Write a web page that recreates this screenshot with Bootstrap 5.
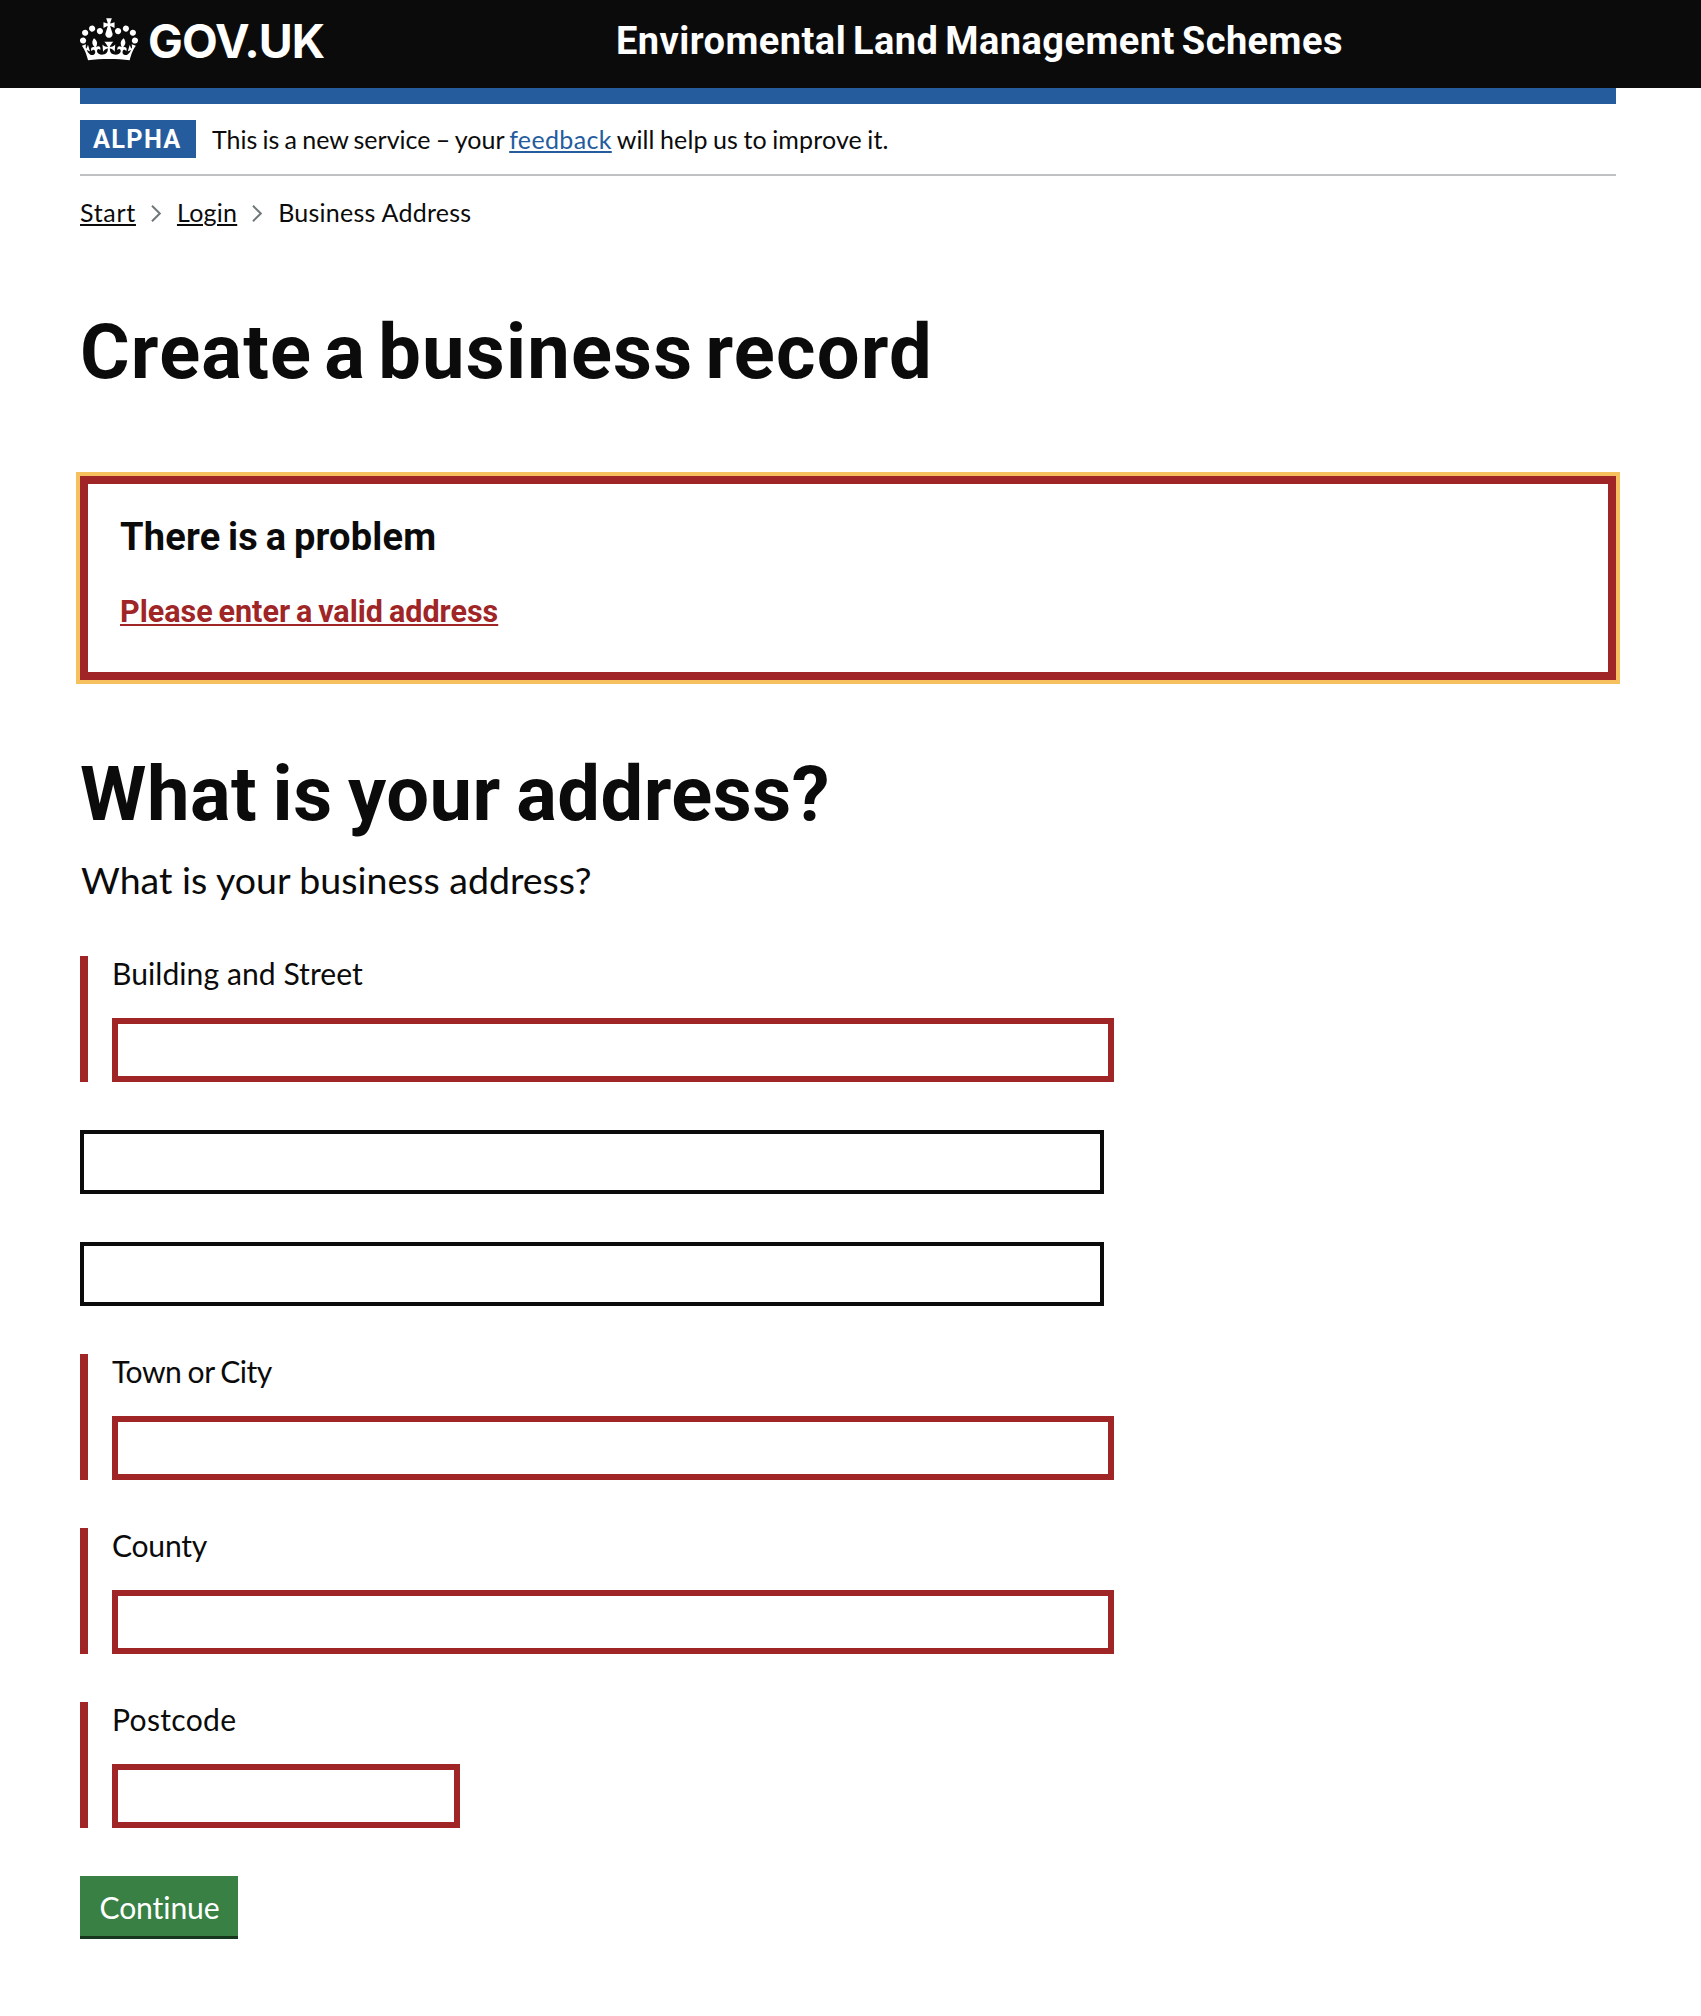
<!DOCTYPE html>
<html lang="en">
<head>
<meta charset="utf-8">
<meta name="viewport" content="width=device-width, initial-scale=1">
<title>Create a business record</title>
<link href="https://cdn.jsdelivr.net/npm/bootstrap@5.3.0/dist/css/bootstrap.min.css" rel="stylesheet">
<style>
  body { font-family: Lato, "Noto Sans", sans-serif; color: #0b0b0b; background: #fff; font-size: 30.1px; font-variant-ligatures: none; }
  .page-width { width: 1536px; margin-left: 80px; }
  .site-header { background: #0b0b0b; height: 88px; padding-bottom: 6px; }
  .logo-col { width: 536px; }
  .logo-col svg { margin-bottom: 3px; }
  .logo-word { font: 700 46.4px/1 Inter, sans-serif; letter-spacing: -.9px; margin-left: 10px; }
  .service-name { font: 700 38px/1 Roboto, sans-serif; letter-spacing: .45px; word-spacing: -3px; }
  .blue-bar { height: 16px; background: #255c9e; }
  .phase { padding: 16px 0; border-bottom: 2px solid #bfc1c3; }
  .phase-tag { width: 116px; height: 38px; background: #255c9e; color: #fff; padding-left: 13px; font: 700 25.3px/40px Roboto, sans-serif; letter-spacing: 1.3px; }
  .phase-text { margin-left: 16px; font-size: 25px; line-height: 38px; word-spacing: -1.2px; }
  a { color: inherit; text-decoration: underline 2px; text-underline-offset: 2px; }
  .phase-text a { color: #255c9e; letter-spacing: .35px; }
  .phase-tail { letter-spacing: .15px; }
  .trail { font-size: 25px; line-height: 40px; margin-top: 16px; letter-spacing: .25px; }
  .trail svg { margin: 0 16px 5px 15px; }
  .trail li:first-child a { letter-spacing: .7px; }
  .heading-xl { font: 700 75.9px/80px Roboto, sans-serif; margin: 81px 0 0; letter-spacing: 1.2px; word-spacing: -8px; }
  .heading-question { margin-top: 75px; letter-spacing: .5px; word-spacing: -4px; }
  .error-box { margin-top: 83px; height: 204px; border: 8px solid #a02526; outline: 4px solid #f6c05f; padding: 33px 32px 0; font-family: Roboto, sans-serif; }
  .error-box h2 { font-size: 38px; line-height: 40px; font-weight: 700; letter-spacing: .2px; word-spacing: -2px; margin: 0 0 32px; }
  .error-box a { display: inline-block; font-size: 30.5px; line-height: 40px; font-weight: 700; letter-spacing: 0; word-spacing: -1.7px; color: #a02526; }
  .intro { font-size: 37.5px; line-height: 40px; margin: 25px 0 56px 1px; }
  .form-stack { gap: 48px; }
  .field-error { border-left: 8px solid #a02526; padding-left: 24px; }
  .field-error label { display: block; line-height: 32px; padding-top: 1px; margin-bottom: 29px; letter-spacing: .05px; }
  .field-error label[for=town] { letter-spacing: -.5px; word-spacing: -1px; }
  .field-error label[for=county] { letter-spacing: -.25px; }
  .field-error label[for=postcode] { letter-spacing: .3px; }
  .field { width: 1024px; height: 64px; border: 4px solid #0b0b0b; border-radius: 0; }
  .field-error .field { width: 1002px; border: 6px solid #a02526; }
  .field-error .field-short { width: 348px; }
  .go { width: 158px; height: 63px; border: 0; border-bottom: 3px solid #17351d; border-radius: 0; background: #388044; color: #fff; font-size: 30.1px; line-height: 60px; letter-spacing: -.1px; font-variant-ligatures: none; padding: 1px 0 0 1px; }
</style>
</head>
<body>
<header class="site-header d-flex">
  <div class="page-width d-flex align-items-center text-white">
    <div class="logo-col d-flex align-items-center">
      <svg width="58" height="43" viewBox="0 0 132 97" fill="#fff" aria-hidden="true"><path fill-rule="evenodd" d="M25 30.2c3.5 1.5 7.7-.2 9.1-3.7 1.5-3.6-.2-7.8-3.9-9.2-3.6-1.4-7.6.3-9.1 3.9-1.4 3.5.3 7.5 3.9 9zM9 39.5c3.6 1.5 7.8-.2 9.2-3.7 1.5-3.6-.2-7.8-3.9-9.1-3.6-1.5-7.6.2-9.1 3.8-1.4 3.5.3 7.5 3.8 9zM4.4 57.2c3.5 1.5 7.7-.2 9.1-3.8 1.5-3.6-.2-7.7-3.9-9.1-3.5-1.5-7.6.3-9.1 3.8-1.4 3.5.3 7.6 3.9 9.1zm38.3-21.4c3.5 1.5 7.7-.2 9.1-3.8 1.5-3.6-.2-7.7-3.9-9.1-3.6-1.5-7.6.3-9.1 3.8-1.3 3.6.4 7.7 3.9 9.1zm64.4-5.6c-3.6 1.5-7.8-.2-9.1-3.7-1.5-3.6.2-7.8 3.8-9.2 3.6-1.4 7.7.3 9.2 3.9 1.3 3.5-.4 7.5-3.9 9zm15.9 9.3c-3.6 1.5-7.7-.2-9.1-3.7-1.5-3.6.2-7.8 3.7-9.1 3.6-1.5 7.7.2 9.2 3.8 1.5 3.5-.3 7.5-3.8 9zm4.7 17.7c-3.6 1.5-7.8-.2-9.2-3.8-1.5-3.6.2-7.7 3.9-9.1 3.6-1.5 7.7.3 9.2 3.8 1.3 3.5-.4 7.6-3.9 9.1zM89.3 35.8c-3.6 1.5-7.8-.2-9.2-3.8-1.4-3.6.2-7.7 3.9-9.1 3.6-1.5 7.7.3 9.2 3.8 1.4 3.6-.3 7.7-3.9 9.1zM69.7 17.7l8.9 4.7V9.3l-8.9 2.8c-.2-.3-.5-.6-.9-.9L72.4 0H59.6l3.5 11.2c-.3.3-.6.5-.9.9l-8.8-2.8v13.1l8.8-4.7c.3.3.6.7.9.9l-5 15.4v.1c-.2.8-.4 1.6-.4 2.4 0 4.1 3.1 7.5 7 8.1h.2c.3 0 .7.1 1 .1.4 0 .7 0 1-.1h.2c4-.6 7.1-4.1 7.1-8.1 0-.8-.1-1.7-.4-2.4V34l-5.1-15.4c.4-.2.7-.6 1-.9zM66 92.8c16.9 0 32.8 1.1 47.1 3.2 4-16.9 8.9-26.7 14-33.5l-9.6-3.4c1 4.9 1.1 7.2 0 10.2-1.5-1.4-3-4.3-4.2-8.7L108.6 76c2.8-2 5-3.2 7.5-3.3-4.4 9.4-10 11.9-13.6 11.2-4.3-.8-6.3-4.6-5.6-7.9 1-4.7 5.7-5.9 8-.5 4.3-8.7-3-11.4-7.6-8.8 7.1-7.2 7.9-13.5 2.1-21.1-8 6.1-8.1 12.3-4.5 20.8-4.7-5.4-12.1-2.5-9.5 6.2 3.4-5.2 7.9-2 7.2 3.1-.6 4.3-6.4 7.8-13.5 7.2-10.3-.9-10.9-8-11.2-13.8 2.5-.5 7.1 1.8 11 7.3L80.2 60c-4.1 4.4-8 5.3-12.3 5.4 1.4-4.4 8-11.6 8-11.6H55.5s6.4 7.2 7.9 11.6c-4.2-.1-8-1-12.3-5.4l1.4 16.4c3.9-5.5 8.5-7.7 10.9-7.3-.3 5.8-.9 12.8-11.1 13.8-7.2.6-12.9-2.9-13.5-7.2-.7-5 3.8-8.3 7.1-3.1 2.7-8.7-4.6-11.6-9.4-6.2 3.7-8.5 3.6-14.7-4.6-20.8-5.8 7.6-5 13.9 2.2 21.1-4.7-2.6-11.9.1-7.7 8.8 2.3-5.5 7.1-4.2 8.1.5.7 3.3-1.3 7.1-5.7 7.9-3.5.7-9-1.8-13.5-11.2 2.5.1 4.7 1.3 7.5 3.3l-4.7-15.4c-1.2 4.4-2.7 7.2-4.3 8.7-1.1-3-.9-5.3 0-10.2l-9.5 3.4c5 6.9 9.9 16.7 14 33.5 14.8-2.1 30.8-3.2 47.7-3.2z"/></svg>
      <span class="logo-word">GOV.UK</span>
    </div>
    <span class="service-name text-nowrap">Enviromental Land Management Schemes</span>
  </div>
</header>
<div class="page-width">
  <div class="blue-bar"></div>
  <div class="phase d-flex">
    <strong class="phase-tag">ALPHA</strong>
    <span class="phase-text text-nowrap">This is a new service – your <a href="#">feedback</a><span class="phase-tail"> will help us to improve it.</span></span>
  </div>
  <nav aria-label="Breadcrumb">
    <ol class="trail list-unstyled d-flex mb-0">
      <li><a href="#">Start</a></li>
      <li><svg width="10" height="17" viewBox="0 0 10 17" fill="none" stroke="#6f777b" stroke-width="2"><path d="M1 .8 8.8 8.5 1 16.2"/></svg><a href="#">Login</a></li>
      <li><svg width="10" height="17" viewBox="0 0 10 17" fill="none" stroke="#6f777b" stroke-width="2"><path d="M1 .8 8.8 8.5 1 16.2"/></svg>Business Address</li>
    </ol>
  </nav>
  <main>
    <h1 class="heading-xl">Create a business record</h1>
    <div class="error-box" role="alert">
      <h2>There is a problem</h2>
      <a href="#street">Please enter a valid address</a>
    </div>
    <h1 class="heading-xl heading-question">What is your address?</h1>
    <p class="intro">What is your business address?</p>
    <form class="form-stack d-flex flex-column align-items-start">
      <div class="field-error"><label for="street">Building and Street</label><input id="street" class="field d-block" type="text"></div>
      <input class="field d-block" type="text" aria-label="Address line 2">
      <input class="field d-block" type="text" aria-label="Address line 3">
      <div class="field-error"><label for="town">Town or City</label><input id="town" class="field d-block" type="text"></div>
      <div class="field-error"><label for="county">County</label><input id="county" class="field d-block" type="text"></div>
      <div class="field-error"><label for="postcode">Postcode</label><input id="postcode" class="field field-short d-block" type="text"></div>
      <button class="go btn" type="button">Continue</button>
    </form>
  </main>
</div>
<script src="https://cdn.jsdelivr.net/npm/bootstrap@5.3.0/dist/js/bootstrap.bundle.min.js"></script>
</body>
</html>
